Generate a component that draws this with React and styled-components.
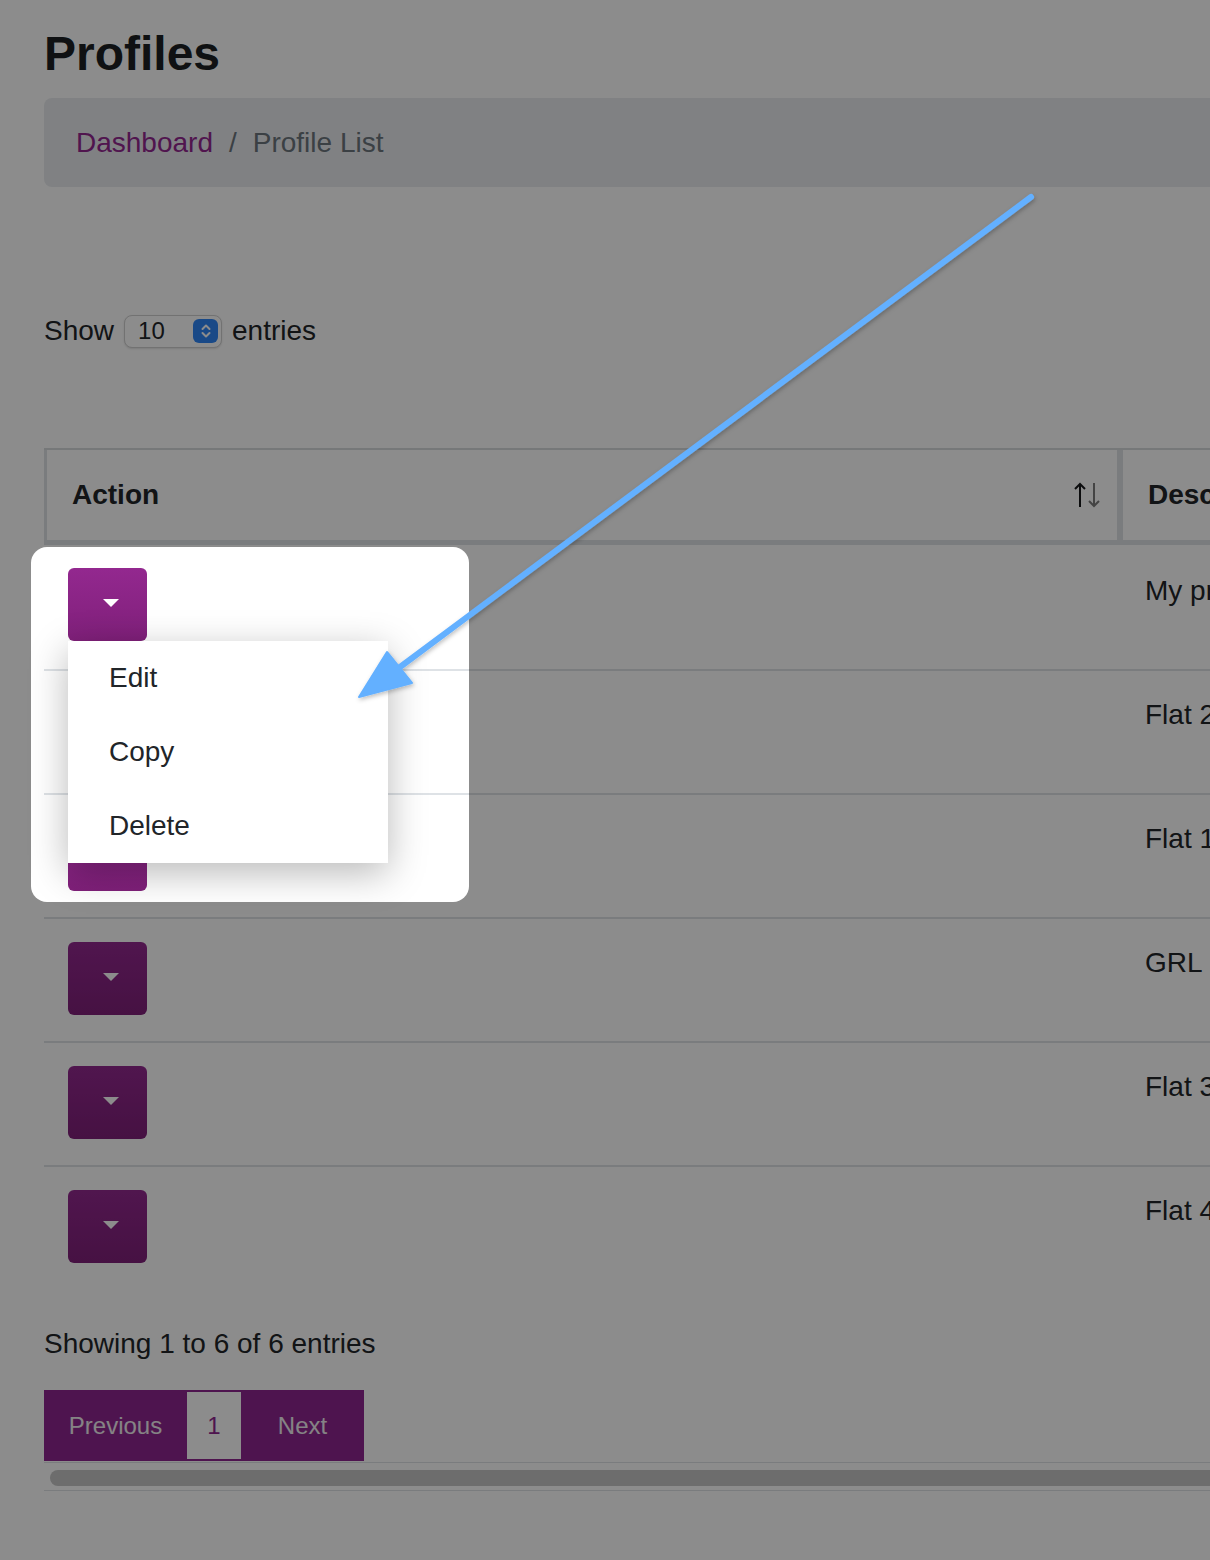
import React from "react";
import styled, { createGlobalStyle } from "styled-components";

const purple = "#8f2690";
const line = "#dee2e6";

const GlobalStyle = createGlobalStyle`
  html,
  body {
    margin: 0;
    padding: 0;
    overflow: hidden;
    background: #fff;
  }

  body {
    font-family: "Liberation Sans", Arial, sans-serif;
    color: #212529;
  }
`;

const Screen = styled.div`
  position: relative;
  width: 1210px;
  height: 1560px;
  overflow: hidden;
`;

const Page = styled.main`
  width: 1500px;
  padding-left: 44px;
  display: flex;
  flex-direction: column;
`;

const Title = styled.h1`
  margin: 26px 0 0;
  font-size: 48px;
  line-height: 56px;
  font-weight: 700;
  color: #1d1f23;
`;

const Breadcrumb = styled.nav`
  margin-top: 16px;
  height: 89px;
  padding-left: 32px;
  display: flex;
  align-items: center;
  background: #e9ecef;
  border-radius: 8px;
  font-size: 28px;

  a {
    color: #93278f;
    text-decoration: none;
  }

  span {
    color: #6c757d;
  }

  .sep {
    padding: 0 16px;
  }
`;

const LengthRow = styled.div`
  margin-top: 123px;
  height: 42px;
  display: flex;
  align-items: center;
  gap: 10px;
  font-size: 28px;
`;

const Select = styled.div`
  width: 98px;
  height: 33px;
  box-sizing: border-box;
  padding: 0 3px 0 13px;
  display: flex;
  align-items: center;
  justify-content: space-between;
  border: 1px solid #cfcfcf;
  border-radius: 8px;
  background: #fff;
  box-shadow: 0 1px 2px rgba(0, 0, 0, 0.12);
  font-size: 24px;
`;

const Stepper = styled.span`
  width: 25px;
  height: 24px;
  display: flex;
  align-items: center;
  justify-content: center;
  border-radius: 6px;
  background: #2f86f6;
`;

const Table = styled.div`
  margin-top: 96px;
  display: flex;
  flex-direction: column;
`;

const HeadRow = styled.div`
  height: 97px;
  box-sizing: border-box;
  display: flex;
  border-top: 2px solid #d7dadd;
  border-bottom: 5px solid ${line};
`;

const HeadCell = styled.div`
  width: ${({ $width }) => $width}px;
  box-sizing: border-box;
  padding: 0 16px 0 25px;
  display: flex;
  align-items: center;
  justify-content: space-between;
  border-left: 3px solid ${line};
  border-right: ${({ $divider }) => ($divider ? `3px solid ${line}` : "none")};
  font-size: 28px;
  font-weight: 700;
`;

const Row = styled.div`
  height: 124px;
  box-sizing: border-box;
  display: flex;
  border-top: ${({ $first }) => ($first ? "none" : `2px solid ${line}`)};
`;

const ActionCell = styled.div`
  position: relative;
  width: 1076px;
  box-sizing: border-box;
  padding: 23px 0 0 24px;
`;

const DescCell = styled.div`
  padding: ${({ $first }) => ($first ? 30 : 28)}px 0 0 25px;
  font-size: 28px;
  line-height: 32px;
  white-space: nowrap;
`;

const Dropdown = styled.div`
  position: relative;
  width: 79px;
`;

const ToggleButton = styled.button`
  width: 79px;
  height: 73px;
  padding: 0;
  display: flex;
  align-items: center;
  justify-content: center;
  border: none;
  border-radius: 6px;
  background: linear-gradient(180deg, #93288f 0%, #80207a 100%);
  cursor: pointer;
`;

const Caret = styled.span`
  margin: -4px 0 0 6px;
  width: 0;
  height: 0;
  border-left: 8px solid transparent;
  border-right: 8px solid transparent;
  border-top: 8px solid #fff;
`;

const Menu = styled.ul`
  position: absolute;
  top: 73px;
  left: 0;
  z-index: 2;
  width: 320px;
  margin: 0;
  padding: 0;
  list-style: none;
  background: #fff;
  box-shadow: 0 10px 36px rgba(0, 0, 0, 0.28);
`;

const MenuItem = styled.li`
  height: 74px;
  padding-left: 41px;
  display: flex;
  align-items: center;
  font-size: 28px;
  color: #212529;
`;

const Info = styled.div`
  margin-top: 34px;
  font-size: 28px;
  line-height: 42px;
`;

const Pagination = styled.div`
  margin-top: 25px;
  height: 71px;
  align-self: flex-start;
  display: flex;
  background: ${purple};
`;

const PageButton = styled.span`
  width: ${({ $width }) => $width}px;
  margin: ${({ $active }) => ($active ? "2px 0" : "0")};
  display: flex;
  align-items: center;
  justify-content: center;
  background: ${({ $active }) => ($active ? "#fff" : "transparent")};
  color: ${({ $active }) => ($active ? purple : "#f2eef2")};
  font-size: 24px;
`;

const ScrollTrack = styled.div`
  margin-top: 1px;
  height: 29px;
  box-sizing: border-box;
  padding: 7px 0 0 6px;
  border-top: 1px solid ${line};
  border-bottom: 1px solid ${line};
`;

const ScrollThumb = styled.div`
  width: 1450px;
  height: 16px;
  border-radius: 8px;
  background: #c6c6c6;
`;

/* annotation layer: dimmed screen with a spotlight hole */
const Spotlight = styled.div`
  position: absolute;
  left: 31px;
  top: 547px;
  width: 438px;
  height: 355px;
  z-index: 5;
  border-radius: 16px;
  box-shadow: 0 0 0 4000px rgba(0, 0, 0, 0.45);
  pointer-events: none;
`;

const ArrowLayer = styled.svg`
  position: absolute;
  left: 0;
  top: 0;
  z-index: 6;
  pointer-events: none;
`;

function SortIcon() {
  return (
    <svg width="28" height="30" viewBox="0 0 28 30">
      <path d="M7 27V4M2 9l5-5 5 5" fill="none" stroke="#16181b" strokeWidth="2" />
      <path d="M21 3v23M16 21l5 5 5-5" fill="none" stroke="#7d7d7d" strokeWidth="2" />
    </svg>
  );
}

function StepperIcon() {
  return (
    <svg width="12" height="16" viewBox="0 0 12 16">
      <path
        d="M2.5 6l3.5-3.5L9.5 6M2.5 10l3.5 3.5L9.5 10"
        fill="none"
        stroke="#fff"
        strokeWidth="2"
        strokeLinecap="round"
        strokeLinejoin="round"
      />
    </svg>
  );
}

const rows = ["My profile", "Flat 2", "Flat 1", "GRL", "Flat 3", "Flat 4"];

export default function App() {
  return (
    <Screen>
      <GlobalStyle />
      <Page>
        <Title>Profiles</Title>
        <Breadcrumb>
          <a href="#dashboard">Dashboard</a>
          <span className="sep">/</span>
          <span>Profile List</span>
        </Breadcrumb>

        <LengthRow>
          <span>Show</span>
          <Select>
            <span>10</span>
            <Stepper>
              <StepperIcon />
            </Stepper>
          </Select>
          <span>entries</span>
        </LengthRow>

        <Table>
          <HeadRow>
            <HeadCell $width={1076} $divider>
              Action
              <SortIcon />
            </HeadCell>
            <HeadCell $width={420}>Description</HeadCell>
          </HeadRow>
          {rows.map((desc, i) => (
            <Row key={desc} $first={i === 0}>
              <ActionCell>
                <Dropdown>
                  <ToggleButton>
                    <Caret />
                  </ToggleButton>
                  {i === 0 && (
                    <Menu>
                      <MenuItem>Edit</MenuItem>
                      <MenuItem>Copy</MenuItem>
                      <MenuItem>Delete</MenuItem>
                    </Menu>
                  )}
                </Dropdown>
              </ActionCell>
              <DescCell $first={i === 0}>{desc}</DescCell>
            </Row>
          ))}
        </Table>

        <Info>Showing 1 to 6 of 6 entries</Info>
        <Pagination>
          <PageButton $width={143}>Previous</PageButton>
          <PageButton $width={54} $active>
            1
          </PageButton>
          <PageButton $width={123}>Next</PageButton>
        </Pagination>
        <ScrollTrack>
          <ScrollThumb />
        </ScrollTrack>
      </Page>

      <Spotlight />
      <ArrowLayer width="1210" height="1560" viewBox="0 0 1210 1560">
        <defs>
          <filter id="arrowShadow" x="-10%" y="-10%" width="120%" height="120%">
            <feDropShadow dx="1" dy="2" stdDeviation="2" floodColor="#000" floodOpacity="0.25" />
          </filter>
        </defs>
        <g filter="url(#arrowShadow)" fill="#64b0ff" stroke="#64b0ff">
          <line x1="1031" y1="197" x2="392" y2="673" strokeWidth="6" strokeLinecap="round" />
          <polygon points="359,697 387,652 412,683" strokeWidth="2" strokeLinejoin="round" />
        </g>
      </ArrowLayer>
    </Screen>
  );
}
